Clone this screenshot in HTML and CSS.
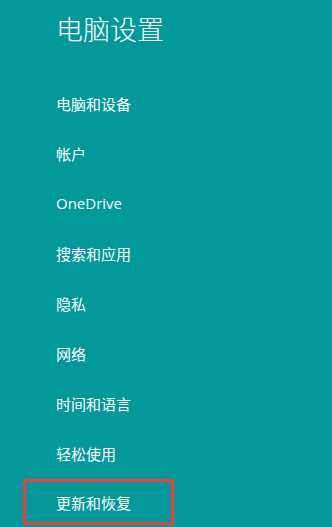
FILE: index.html
```html
<!DOCTYPE html>
<html lang="zh-CN">
<head>
<meta charset="utf-8">
<title>电脑设置</title>
<link rel="stylesheet" href="styles.css">
</head>
<body>
<div class="page">
  <h1 class="title">电脑设置</h1>
  <ul class="menu">
    <li class="item">电脑和设备</li>
    <li class="item">帐户</li>
    <li class="item latin">OneDrive</li>
    <li class="item">搜索和应用</li>
    <li class="item">隐私</li>
    <li class="item">网络</li>
    <li class="item">时间和语言</li>
    <li class="item">轻松使用</li>
    <li class="item highlighted">更新和恢复</li>
  </ul>
</div>
</body>
</html>
```
FILE: styles.css
```css
html, body {
  margin: 0;
  padding: 0;
  background: #03989a;
}
.page {
  width: 332px;
  height: 527px;
  overflow: hidden;
  background: #03989a;
  color: #ffffff;
  font-family: "Noto Sans CJK SC", "Noto Sans", sans-serif;
}
.title {
  margin: 0 0 20px 0;
  padding-left: 56px;
  height: 58px;
  line-height: 58px;
  font-size: 27px;
  font-weight: 300;
}
.menu {
  list-style: none;
  margin: 0;
  padding: 0;
}
.item {
  height: 50px;
  display: flex;
  align-items: center;
  padding-left: 56px;
  font-size: 15px;
  font-weight: 400;
}
.latin {
  font-family: "Open Sans", "Noto Sans", sans-serif;
  font-size: 15px;
}
.highlighted {
  box-sizing: border-box;
  width: 151px;
  height: 46px;
  margin: 1px 0 0 23px;
  padding-left: 30px;
  border: 3px solid #f53b3b;
}
```
